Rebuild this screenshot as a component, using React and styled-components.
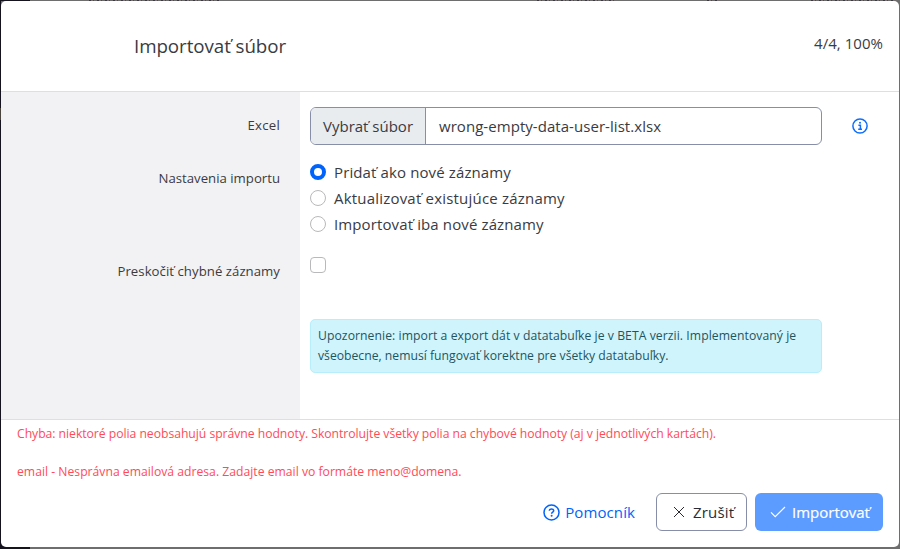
import React, { useState } from 'react';
import styled, { createGlobalStyle, css } from 'styled-components';

const GlobalStyle = createGlobalStyle`
  *, *::before, *::after { box-sizing: border-box; }
  body {
    margin: 0;
    overflow: hidden;
    font-family: 'Open Sans', 'Noto Sans', sans-serif;
    font-size: 15px;
    color: #3a3b42;
  }
`;

const speckles = 'repeating-linear-gradient(90deg, #3c3841 0 2px, #77726f 2px 4px, #4b4a58 4px 5px, #6c6a6b 5px 8px)';

const Backdrop = styled.div`
  display: flex;
  width: 900px;
  height: 549px;
  padding: 1px 1px 2px;
  background:
    linear-gradient(#15131d, #15131d) 0 0 / 30px 1px no-repeat,
    ${speckles} 89px 0 / 131px 1px no-repeat,
    ${speckles} 537px 0 / 78px 1px no-repeat,
    ${speckles} 707px 0 / 12px 1px no-repeat,
    ${speckles} 811px 0 / 84px 1px no-repeat,
    linear-gradient(#15131d, #15131d) 0 100% / 30px 6px no-repeat,
    linear-gradient(#4a443f, #4a443f) 0 108px / 1px 12px no-repeat,
    linear-gradient(#15131d, #15131d) 0 0 / 1px 100% no-repeat,
    #6f6e6f;
`;

const Dialog = styled.div`
  display: flex;
  flex-direction: column;
  flex: 1;
  overflow: hidden;
  border-radius: 5px;
  background: #fff;
`;

const Header = styled.header`
  display: flex;
  flex: none;
  justify-content: space-between;
  height: 91px;
  padding: 0 16px 0 133px;
  border-bottom: 1px solid #dedfe3;
`;

const Title = styled.h1`
  margin: 0;
  padding-top: 31px;
  font-size: 18.75px;
  font-weight: 400;
  line-height: 28px;
  letter-spacing: -0.07px;
`;

const Progress = styled.span`
  padding-top: 30px;
  line-height: 24px;
  letter-spacing: 0.04px;
`;

const Body = styled.main`
  display: grid;
  flex: none;
  grid-template-columns: 299px 1fr;
  grid-template-rows: 65px 93px 67px 1fr;
  height: 328px;
  border-bottom: 1px solid #dedfe3;
`;

const Label = styled.div`
  padding: ${({ $top }) => $top}px 20px 0 0;
  background: #f2f2f4;
  font-size: 13.2px;
  line-height: 20px;
  text-align: right;
  letter-spacing: ${({ $spacing = 0 }) => $spacing}px;
`;

const Field = styled.div`
  padding: ${({ $top }) => $top}px 0 0 10px;
`;

const FileLine = styled.div`
  display: flex;
  align-items: center;
`;

const FileControl = styled.div`
  display: flex;
  width: 512px;
  height: 38px;
  overflow: hidden;
  border: 1px solid #868ea8;
  border-radius: 6px;
  line-height: 36px;
`;

const FileButton = styled.span`
  width: 115px;
  padding-left: 12px;
  border-right: 1px solid #868ea8;
  background: #e9ecef;
  white-space: nowrap;
`;

const FileName = styled.span`
  padding-left: 13px;
  letter-spacing: 0.05px;
`;

const InfoButton = styled.button`
  display: flex;
  margin-left: 30px;
  padding: 0;
  border: 0;
  background: none;
  color: #0d6efd;
`;

const Option = styled.label`
  display: flex;
  align-items: center;
  gap: 8px;
  height: 26px;
  letter-spacing: ${({ $spacing }) => $spacing}px;
`;

const box = css`
  appearance: none;
  flex: none;
  width: 16px;
  height: 16px;
  margin: 0;
  border: 1px solid #b9b9bb;
  background: #fff;
`;

const Radio = styled.input.attrs({ type: 'radio' })`
  ${box}
  border-radius: 50%;
  &:checked { border: 4px solid #0063fb; }
`;

const Checkbox = styled.input.attrs({ type: 'checkbox' })`
  ${box}
  display: block;
  border-radius: 4px;
`;

const Notice = styled.div`
  width: 512px;
  height: 54px;
  padding: 6px 7px;
  border: 1px solid #b6effb;
  border-radius: 5px;
  background: #cff4fc;
  color: #1f5460;
  font-size: 12.2px;
  line-height: 20px;
  white-space: nowrap;
`;

const NoticeLine = styled.div`
  letter-spacing: ${({ $spacing = 0 }) => $spacing}px;
`;

const Footer = styled.footer`
  display: flex;
  flex-direction: column;
  flex: 1;
  padding: 4px 16px 16px;
`;

const ErrorText = styled.p`
  margin: 0;
  color: #ff4b58;
  font-size: 12.2px;
  line-height: 20px;
  white-space: nowrap;
  letter-spacing: ${({ $spacing = 0 }) => $spacing}px;
  & + & { margin-top: 18px; }
`;

const Actions = styled.div`
  display: flex;
  justify-content: flex-end;
  margin-top: auto;
`;

const Button = styled.button`
  display: flex;
  align-items: center;
  height: 38px;
  padding: 0;
  border: 1px solid transparent;
  border-radius: 6px;
  background: none;
  font: inherit;
  color: inherit;
  svg { flex: none; }
`;

const HelpButton = styled(Button)`
  gap: 5px;
  margin-right: 20px;
  color: #0063fb;
  letter-spacing: 0.1px;
`;

const CancelButton = styled(Button)`
  gap: 6px;
  width: 91px;
  margin-right: 8px;
  padding-left: 14px;
  border-color: #868ea8;
  color: #2b2c33;
  letter-spacing: 0.2px;
`;

const SubmitButton = styled(Button)`
  gap: 6px;
  width: 128px;
  padding-left: 14px;
  background: #5c9bff;
  color: #fff;
  -webkit-text-stroke: 0.2px #fff;
`;

const InfoIcon = () => (
  <svg width="16" height="16" viewBox="0 0 16 16" fill="none" stroke="currentColor" strokeWidth="1.5">
    <circle cx="8" cy="8" r="7.1" />
    <path d="M6.4 7.2H8.4V11.3M6.2 11.3H10" />
    <circle cx="8" cy="4.8" r="1" fill="currentColor" stroke="none" />
  </svg>
);

const HelpIcon = () => (
  <svg width="17" height="17" viewBox="0 0 17 17" fill="none" stroke="currentColor" strokeWidth="1.5">
    <circle cx="8.5" cy="8.5" r="7.5" />
    <path d="M6.3 6.7C6.4 5.5 7.3 4.9 8.5 4.9C9.8 4.9 10.7 5.6 10.7 6.7C10.7 8.1 8.6 8 8.6 9.8" />
    <circle cx="8.6" cy="11.8" r="1" fill="currentColor" stroke="none" />
  </svg>
);

const CloseIcon = () => (
  <svg width="16" height="16" viewBox="0 0 16 16" fill="none" stroke="currentColor" strokeWidth="1">
    <path d="M3 3L13 13M13 3L3 13" />
  </svg>
);

const CheckIcon = () => (
  <svg width="16" height="16" viewBox="0 0 16 16" fill="none" stroke="currentColor" strokeWidth="1.2">
    <path d="M1 8.4L5.2 12.6L15 3" />
  </svg>
);

const modes = [
  { id: 'append', text: 'Pridať ako nové záznamy', spacing: 0.12 },
  { id: 'update', text: 'Aktualizovať existujúce záznamy', spacing: 0.2 },
  { id: 'onlyNew', text: 'Importovať iba nové záznamy', spacing: 0.12 },
];

export default function App() {
  const [mode, setMode] = useState('append');
  return (
    <>
      <GlobalStyle />
      <Backdrop>
        <Dialog role="dialog">
          <Header>
            <Title>Importovať súbor</Title>
            <Progress>4/4, 100%</Progress>
          </Header>
          <Body>
            <Label $top={23} $spacing={0.25}>Excel</Label>
            <Field $top={15}>
              <FileLine>
                <FileControl>
                  <FileButton>Vybrať súbor</FileButton>
                  <FileName>wrong-empty-data-user-list.xlsx</FileName>
                </FileControl>
                <InfoButton aria-label="Info"><InfoIcon /></InfoButton>
              </FileLine>
            </Field>
            <Label $top={11}>Nastavenia importu</Label>
            <Field $top={2}>
              {modes.map(({ id, text, spacing }) => (
                <Option key={id} $spacing={spacing}>
                  <Radio name="mode" checked={mode === id} onChange={() => setMode(id)} />
                  {text}
                </Option>
              ))}
            </Field>
            <Label $top={11} $spacing={0.04}>Preskočiť chybné záznamy</Label>
            <Field $top={7}><Checkbox /></Field>
            <Label $top={0} />
            <Field $top={2}>
              <Notice>
                <NoticeLine $spacing={0.06}>Upozornenie: import a export dát v datatabuľke je v BETA verzii. Implementovaný je</NoticeLine>
                <NoticeLine>všeobecne, nemusí fungovať korektne pre všetky datatabuľky.</NoticeLine>
              </Notice>
            </Field>
          </Body>
          <Footer>
            <ErrorText $spacing={-0.035}>
              Chyba: niektoré polia neobsahujú správne hodnoty. Skontrolujte všetky polia na chybové hodnoty (aj v jednotlivých kartách).
            </ErrorText>
            <ErrorText>email - Nesprávna emailová adresa. Zadajte email vo formáte meno@domena.</ErrorText>
            <Actions>
              <HelpButton><HelpIcon />Pomocník</HelpButton>
              <CancelButton><CloseIcon />Zrušiť</CancelButton>
              <SubmitButton><CheckIcon />Importovať</SubmitButton>
            </Actions>
          </Footer>
        </Dialog>
      </Backdrop>
    </>
  );
}
